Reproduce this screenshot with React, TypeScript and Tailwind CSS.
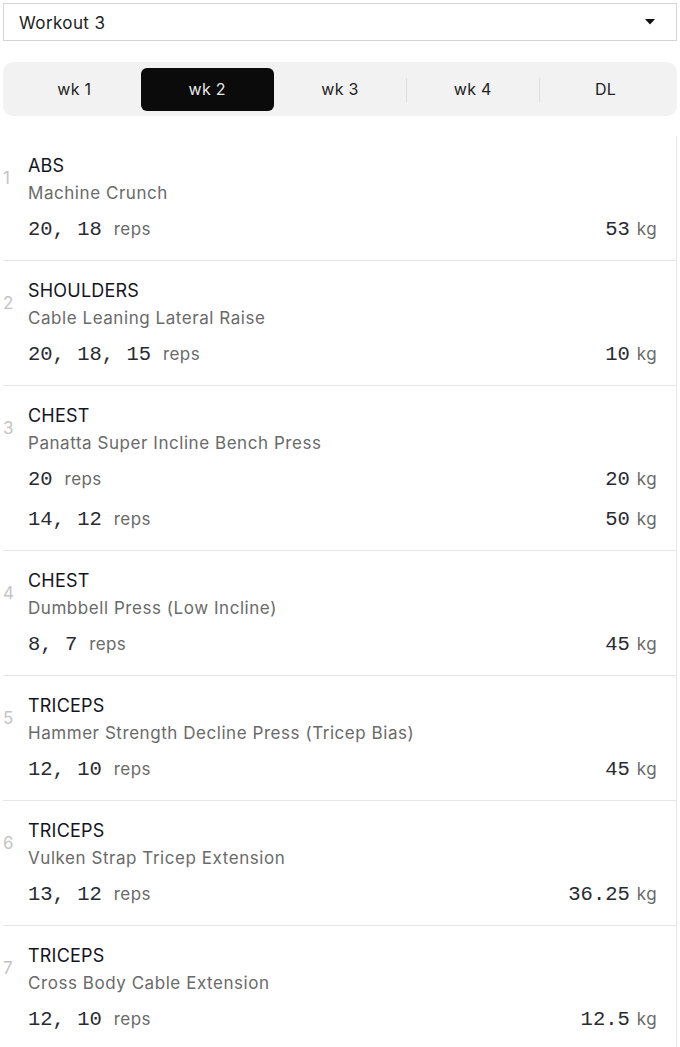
import React from "react";

type SetRow = { reps: string; kg: string };
type Ex = { cat: string; name: string; sets: SetRow[] };

const data: Ex[] = [
  { cat: "ABS", name: "Machine Crunch", sets: [{ reps: "20, 18", kg: "53" }] },
  { cat: "SHOULDERS", name: "Cable Leaning Lateral Raise", sets: [{ reps: "20, 18, 15", kg: "10" }] },
  {
    cat: "CHEST",
    name: "Panatta Super Incline Bench Press",
    sets: [
      { reps: "20", kg: "20" },
      { reps: "14, 12", kg: "50" },
    ],
  },
  { cat: "CHEST", name: "Dumbbell Press (Low Incline)", sets: [{ reps: "8, 7", kg: "45" }] },
  { cat: "TRICEPS", name: "Hammer Strength Decline Press (Tricep Bias)", sets: [{ reps: "12, 10", kg: "45" }] },
  { cat: "TRICEPS", name: "Vulken Strap Tricep Extension", sets: [{ reps: "13, 12", kg: "36.25" }] },
  { cat: "TRICEPS", name: "Cross Body Cable Extension", sets: [{ reps: "12, 10", kg: "12.5" }] },
];

const sans = "font-['Inter','Noto_Sans',sans-serif]";
const mono = "font-['Liberation_Mono','DejaVu_Sans_Mono',monospace]";

const tabs = ["wk 1", "wk 2", "wk 3", "wk 4", "DL"];

export default function App() {
  return (
    <div className={`w-[680px] bg-white px-[3px] pt-[3px] ${sans}`}>
      <div className="flex h-[38px] items-center justify-between border border-[#d4d4d4] bg-white pl-[15px] pr-[21px]">
        <span className="pt-[3px] text-[17px] tracking-[0.4px] text-[#222]">Workout 3</span>
        <svg width="10" height="6" viewBox="0 0 10 6">
          <path d="M0 0 L10 0 L5 5.5 Z" fill="#111" />
        </svg>
      </div>

      <div className="mt-[21px] flex h-[54px] items-center rounded-[10px] bg-[#f2f2f2] px-[5px]">
        {tabs.map((t, i) => {
          const active = i === 1;
          const showSep = i >= 3;
          return (
            <div key={t} className="relative flex h-[43px] flex-1 items-center justify-center">
              {showSep && <div className="absolute left-0 top-[10px] h-[24px] w-px bg-[#dedede]" />}
              <div
                className={`flex h-full w-full items-center justify-center rounded-[6px] text-[16px] tracking-[0.3px] ${
                  active ? "bg-[#0b0b0b] text-[#e8e8e8]" : "text-[#222]"
                }`}
              >
                {t}
              </div>
            </div>
          );
        })}
      </div>

      <div className="mt-[20px] border-r border-[#e4e4e4]">
        {data.map((ex, i) => (
          <div key={i} className="flex border-b border-[#e6e6e6] pb-[10px] pt-[17px]">
            <div className="w-[25px] shrink-0 pt-[13px] text-[17px] leading-[24px] text-[#c4c4c4]">{i + 1}</div>
            <div className="flex-1 pr-[19px]">
              <div className="text-[18px] leading-[26px] tracking-[0.2px] text-[#14141f]">{ex.cat}</div>
              <div className="mt-[1px] text-[17px] leading-[26px] tracking-[0.55px] text-[#6a6a6a]">{ex.name}</div>
              <div className="mt-[4px]">
                {ex.sets.map((s, j) => (
                  <div key={j} className="flex h-[40px] items-center justify-between">
                    <div className="flex items-baseline gap-[12px]">
                      <span className={`${mono} text-[20.5px] text-[#2a2a32]`}>{s.reps}</span>
                      <span className="text-[17px] tracking-[0.4px] text-[#6a6a6a]">reps</span>
                    </div>
                    <div className="flex items-baseline gap-[7px]">
                      <span className={`${mono} text-[20.5px] text-[#2a2a32]`}>{s.kg}</span>
                      <span className="text-[17px] tracking-[0.4px] text-[#6a6a6a]">kg</span>
                    </div>
                  </div>
                ))}
              </div>
            </div>
          </div>
        ))}
      </div>
    </div>
  );
}
